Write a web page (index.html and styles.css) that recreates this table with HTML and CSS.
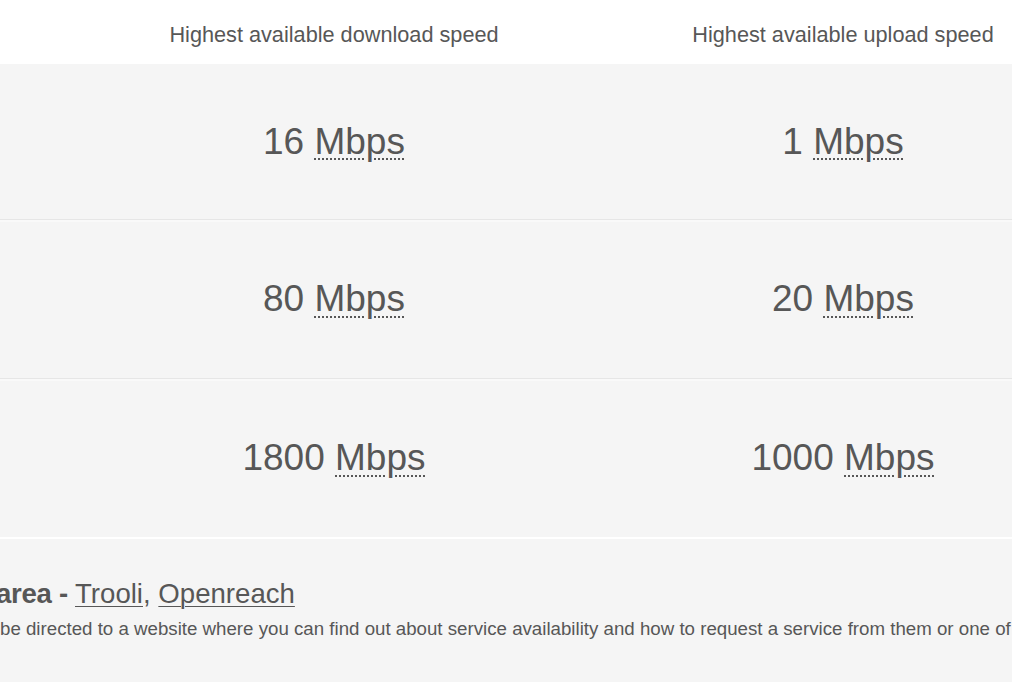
FILE: index.html
```html
<!DOCTYPE html>
<html lang="en">
<head>
<meta charset="utf-8">
<title>Broadband speeds</title>
<link rel="stylesheet" href="styles.css">
</head>
<body>
<div class="speeds">
  <div class="row head">
    <div class="cell">Highest available download speed</div>
    <div class="cell">Highest available upload speed</div>
  </div>
  <div class="row data">
    <div class="cell">16 <abbr title="Megabits per second">Mbps</abbr></div>
    <div class="cell">1 <abbr title="Megabits per second">Mbps</abbr></div>
  </div>
  <div class="row data">
    <div class="cell">80 <abbr title="Megabits per second">Mbps</abbr></div>
    <div class="cell">20 <abbr title="Megabits per second">Mbps</abbr></div>
  </div>
  <div class="row data last">
    <div class="cell">1800 <abbr title="Megabits per second">Mbps</abbr></div>
    <div class="cell">1000 <abbr title="Megabits per second">Mbps</abbr></div>
  </div>
  <div class="providers">
    <p class="providers-title"><strong>area -</strong> <a href="#">Trooli</a>, <a href="#">Openreach</a></p>
    <p class="providers-note">be directed to a website where you can find out about service availability and how to request a service from them or one of</p>
  </div>
</div>
</body>
</html>
```

FILE: styles.css
```css
html, body {
  margin: 0;
  padding: 0;
  background: #ffffff;
  overflow: hidden;
}

body {
  font-family: "Liberation Sans", Arial, sans-serif;
  color: #575757;
  width: 1012px;
  height: 700px;
}

.speeds {
  width: 1012px;
  overflow: hidden;
}

.row {
  display: grid;
  grid-template-columns: 668px 344px;
}

.cell {
  text-align: center;
  white-space: nowrap;
}

.row .cell:nth-child(2) {
  padding-left: 6px;
}

.head {
  height: 64px;
  background: #ffffff;
}

.head .cell {
  font-size: 21.7px;
  line-height: 25px;
  padding-top: 22px;
}

.data {
  background: #f5f5f5;
  height: 158px;
  align-items: center;
  font-size: 37px;
  border-top: 1px solid #e6e6e6;
  box-shadow: inset 0 2px 0 #f9f9f9;
}

.head + .data {
  border-top: none;
  height: 155px;
  box-shadow: none;
}

abbr {
  text-decoration: underline dotted #575757;
  text-decoration-thickness: 2px;
  text-underline-offset: 5px;
}

.providers {
  background: #f5f5f5;
  border-top: 2px solid #ffffff;
  height: 145px;
  box-sizing: border-box;
  padding-top: 39px;
}

.providers p {
  margin: 0;
  white-space: nowrap;
}

.providers-title {
  font-size: 27.6px;
  line-height: 32px;
  margin-left: -4px !important;
}

.providers-title strong {
  font-weight: bold;
  letter-spacing: -0.3px;
}

.providers-title a {
  color: #575757;
  text-decoration: underline;
  text-decoration-thickness: 1px;
  text-underline-offset: 3px;
}

.providers-note {
  font-size: 18.7px;
  line-height: 20px;
  margin-top: 9px !important;
}
```
